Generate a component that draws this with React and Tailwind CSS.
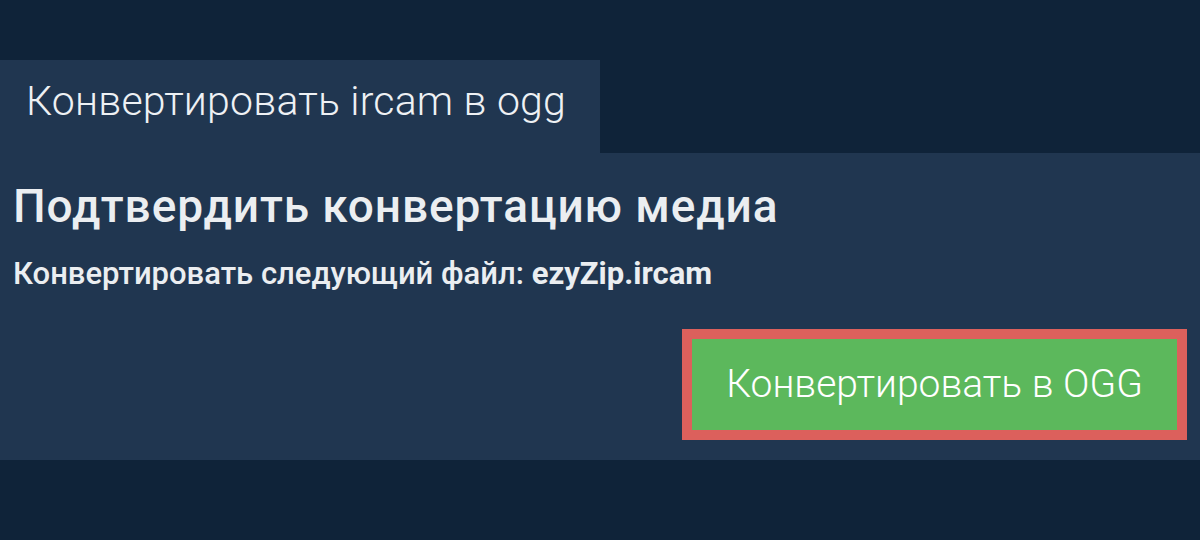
export default function App() {
  return (
    <div className="w-[1200px] h-[540px] bg-[#0f2339] pt-[60px] font-['Roboto',sans-serif]">
      <div className="w-[600px] h-[93px] bg-[#203650] pl-[26px] pt-[17px]">
        <div className="text-[41px] font-light text-[#eef1f4] leading-[48px] tracking-[0.2px]">Конвертировать ircam в ogg</div>
      </div>
      <div className="h-[307px] bg-[#203650] pl-[13px] pr-[13px] pt-[26px] flex flex-col">
        <h1 className="text-[46px] font-medium text-[#ebeef1] leading-[54px] tracking-[0.9px]">Подтвердить конвертацию медиа</h1>
        <p className="mt-[22px] text-[31px] font-medium text-[#ebeef1] leading-[37px]">Конвертировать следующий файл: <b className="font-bold">ezyZip.ircam</b></p>
        <div className="flex justify-end mt-[37px]">
          <button className="w-[505px] h-[111px] border-[10px] border-[#dc605c] bg-[#5cb85c] text-white text-[39px] font-light leading-none">Конвертировать в OGG</button>
        </div>
      </div>
    </div>
  );
}
